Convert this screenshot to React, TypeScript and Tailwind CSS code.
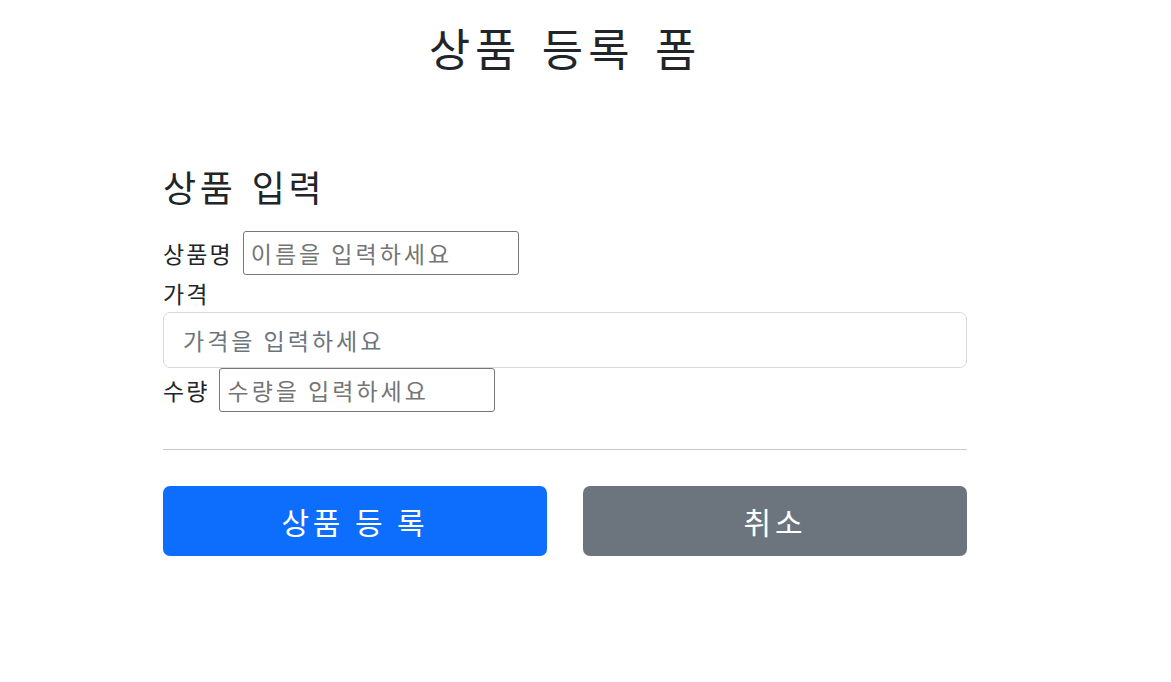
export default function App() {
  return (
    <div
      className="min-h-screen bg-white text-[#212529]"
      style={{ fontFamily: '"Noto Sans CJK KR", "Noto Sans", sans-serif' }}
    >
      <div className="ml-[163px] w-[804px]">
        <div className="pt-[21px] text-center">
          <h2 className="text-[45px] leading-[1.2] font-normal tracking-[0.11em] [word-spacing:0.12em]">상품 등록 폼</h2>
        </div>

        <h4 className="mt-[90px] text-[36px] leading-[1.2] font-normal tracking-[0.1em] [word-spacing:0.1em]">상품 입력</h4>

        <form className="mt-[23px] tracking-[0.13em]">
          <div className="flex h-[44px] items-center gap-[10px]">
            <label htmlFor="itemName" className="text-[23px]">상품명</label>
            <input
              id="itemName"
              type="text"
              placeholder="이름을 입력하세요"
              className="h-[44px] w-[276px] rounded-[3px] border border-[#767676] px-[7px] text-[23px] tracking-[0.13em] placeholder:text-[#757575] outline-none"
            />
          </div>
          <div className="flex h-[37px] items-center">
            <label htmlFor="price" className="text-[23px]">가격</label>
          </div>
          <input
            id="price"
            type="text"
            placeholder="가격을 입력하세요"
            className="block h-[56px] w-full rounded-[7px] border border-[#d6dadf] px-[19px] text-[23px] tracking-[0.13em] placeholder:text-[#6c757d] outline-none"
          />
          <div className="flex h-[44px] items-center gap-[10px]">
            <label htmlFor="quantity" className="text-[23px]">수량</label>
            <input
              id="quantity"
              type="text"
              placeholder="수량을 입력하세요"
              className="h-[44px] w-[276px] rounded-[3px] border border-[#767676] px-[7px] text-[23px] tracking-[0.13em] placeholder:text-[#757575] outline-none"
            />
          </div>

          <hr className="mt-[37px] border-t border-[#c8c9ca]" />

          <div className="mt-[36px] grid grid-cols-2 gap-[36px]">
            <button
              type="button"
              className="h-[70px] rounded-[7px] bg-[#0d6efd] text-[30px] tracking-[0.13em] text-white"
            >
              상품 등 록
            </button>
            <button
              type="button"
              className="h-[70px] rounded-[7px] bg-[#6c757d] text-[30px] tracking-[0.13em] text-white"
            >
              취소
            </button>
          </div>
        </form>
      </div>
    </div>
  );
}
